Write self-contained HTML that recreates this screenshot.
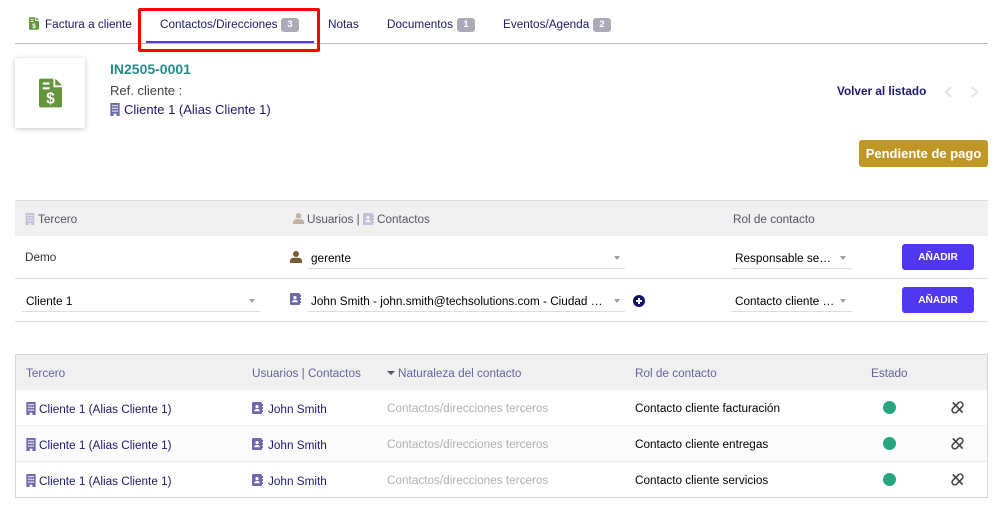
<!DOCTYPE html>
<html><head><meta charset="utf-8"><style>
html,body{margin:0;padding:0;background:#fff;}
body{width:1004px;height:509px;position:relative;overflow:hidden;font-family:"Liberation Sans",sans-serif;font-size:11.75px;color:#000;}
.t{position:absolute;white-space:nowrap;line-height:16px;}
.b{position:absolute;}
.n{color:#1a1a6e;}
.badge{position:absolute;width:18px;height:14px;background:#aaaab8;border-radius:3px;color:#fff;font-size:9.5px;font-weight:bold;line-height:14px;text-align:center;}
.h{color:#555566;}
.h2{color:#6464a0;}
.sel{position:absolute;height:1px;background:#ddd;}
.ar{position:absolute;width:0;height:0;border-left:3.5px solid transparent;border-right:3.5px solid transparent;border-top:4px solid #a0a0a0;}
.btn{position:absolute;left:902px;width:72px;height:26px;background:#4f38f0;border-radius:3px;color:#fff;font-size:10.2px;font-weight:bold;text-align:center;line-height:28px;}
.g{color:#b0b0b0;}
.dot{position:absolute;left:883px;width:13px;height:13px;border-radius:50%;background:#25a580;}
svg{position:absolute;display:block;}
</style></head><body>
<svg width="0" height="0" style="position:absolute"><defs>
<symbol id="bld" viewBox="0 0 10 14"><path d="M0 0H10V14H6.5V11.5H3.5V14H0Z" fill="#6c6aa8"/><g fill="#fff"><rect x="2" y="2" width="1.5" height="1.5"/><rect x="4.3" y="2" width="1.5" height="1.5"/><rect x="6.6" y="2" width="1.5" height="1.5"/><rect x="2" y="5" width="1.5" height="1.5"/><rect x="4.3" y="5" width="1.5" height="1.5"/><rect x="6.6" y="5" width="1.5" height="1.5"/><rect x="2" y="8" width="1.5" height="1.5"/><rect x="4.3" y="8" width="1.5" height="1.5"/><rect x="6.6" y="8" width="1.5" height="1.5"/></g></symbol>
<symbol id="con" viewBox="0 0 11 12"><rect x="0" y="0" width="10" height="12" rx="1.3" fill="#6c6aa8"/><rect x="10" y="2" width="1" height="2" fill="#6c6aa8"/><rect x="10" y="5" width="1" height="2" fill="#6c6aa8"/><rect x="10" y="8" width="1" height="2" fill="#6c6aa8"/><circle cx="5" cy="4.6" r="1.6" fill="#fff"/><path d="M2.2 9.2C2.2 7.6 3.6 7 5 7S7.8 7.6 7.8 9.2Z" fill="#fff"/></symbol>
<symbol id="usr" viewBox="0 0 12 12"><circle cx="6" cy="3" r="3" fill="#7a5c32"/><path d="M0 12V10C0 7.8 2 6.8 3.5 6.8H8.5C10 6.8 12 7.8 12 10V12Z" fill="#7a5c32"/></symbol>
<symbol id="inv" viewBox="0 0 24 30"><path d="M2 0H15V9H24V28A2 2 0 0 1 22 30H2A2 2 0 0 1 0 28V2A2 2 0 0 1 2 0Z" fill="#65953c"/><path d="M17 0L24 7H17Z" fill="#65953c"/><g fill="#fff"><rect x="4" y="4" width="7" height="2.2"/><rect x="4" y="9" width="7" height="2.2"/></g><text x="12" y="26" font-family="Liberation Sans" font-weight="bold" font-size="16" fill="#fff" text-anchor="middle">$</text></symbol>
<symbol id="unl" viewBox="0 0 14 14" fill="none"><path d="M2 1.5L12.5 12.5" stroke="#444" stroke-width="1.7"/><rect x="-7" y="-2.9" width="14" height="5.8" rx="2.9" transform="translate(7 7) rotate(-45)" stroke="#444" stroke-width="1.7"/></symbol>
</defs></svg>

<!-- tabs -->
<svg style="left:29px;top:17px" width="10" height="13"><use href="#inv" width="10" height="13"/></svg>
<div class="t n" style="left:45px;top:17px">Factura a cliente</div>
<div class="t n" style="left:160px;top:17px">Contactos/Direcciones</div>
<div class="badge" style="left:281px;top:18px">3</div>
<div class="t n" style="left:328px;top:17px">Notas</div>
<div class="t n" style="left:387px;top:17px">Documentos</div>
<div class="badge" style="left:457px;top:18px">1</div>
<div class="t n" style="left:503px;top:17px">Eventos/Agenda</div>
<div class="badge" style="left:593px;top:18px">2</div>
<div class="b" style="left:15px;top:43px;width:973px;height:1px;background:#bbb"></div>
<div class="b" style="left:146px;top:41px;width:168px;height:2px;background:#4f38f0"></div>
<div class="b" style="left:138px;top:8px;width:182px;height:44px;box-sizing:border-box;border:3px solid #f00;border-radius:2px"></div>

<!-- header card -->
<div class="b" style="left:15px;top:58px;width:70px;height:70px;background:#fff;box-shadow:0 1px 5px rgba(0,0,0,.22)"></div>
<svg style="left:39px;top:78px" width="23" height="30"><use href="#inv" width="23" height="30"/></svg>
<div class="t" style="left:110px;top:61px;font-size:14px;font-weight:bold;color:#2b8a8a">IN2505-0001</div>
<div class="t" style="left:110px;top:83px;color:#444;font-size:13px">Ref. cliente :</div>
<svg style="left:110px;top:103px" width="10" height="13"><use href="#bld" width="10" height="13"/></svg>
<div class="t n" style="left:124px;top:102px;font-size:13px">Cliente 1 (Alias Cliente 1)</div>

<div class="t" style="left:837px;top:84px;font-size:11.75px;font-weight:bold;color:#1a1a6e">Volver al listado</div>
<svg style="left:944px;top:86px" width="9" height="12" fill="none"><path d="M7 1L2 6L7 11" stroke="#e4e4e4" stroke-width="2"/></svg>
<svg style="left:970px;top:86px" width="9" height="12" fill="none"><path d="M2 1L7 6L2 11" stroke="#e4e4e4" stroke-width="2"/></svg>
<div class="b" style="left:859px;top:140px;width:129px;height:27px;background:#bf9726;border-radius:3px;color:#fff;font-size:13px;font-weight:bold;text-align:center;line-height:27px">Pendiente de pago</div>

<!-- add form -->
<div class="b" style="left:15px;top:200px;width:973px;height:36px;background:#f0f0f0;border-top:1px solid #ddd;box-sizing:border-box"></div>
<svg style="left:25px;top:213px;opacity:.35" width="10" height="12"><use href="#bld" width="10" height="12"/></svg>
<div class="t h" style="left:38px;top:212px">Tercero</div>
<svg style="left:293px;top:213px;opacity:.4" width="11" height="11"><use href="#usr" width="11" height="11"/></svg>
<div class="t h" style="left:307px;top:212px">Usuarios |</div>
<svg style="left:363px;top:213px;opacity:.35" width="11" height="12"><use href="#con" width="11" height="12"/></svg>
<div class="t h" style="left:377px;top:212px">Contactos</div>
<div class="t h" style="left:733px;top:212px">Rol de contacto</div>

<div class="t" style="left:25px;top:250px;color:#333">Demo</div>
<svg style="left:290px;top:251px" width="12" height="12"><use href="#usr" width="12" height="12"/></svg>
<div class="t" style="left:311px;top:251px">gerente</div>
<div class="sel" style="left:307px;top:268px;width:318px"></div>
<div class="ar" style="left:614px;top:256px"></div>
<div class="t" style="left:735px;top:251px">Responsable se…</div>
<div class="sel" style="left:731px;top:268px;width:121px"></div>
<div class="ar" style="left:840px;top:256px"></div>
<div class="btn" style="top:244px">AÑADIR</div>
<div class="b" style="left:15px;top:278px;width:973px;height:1px;background:#ddd"></div>

<div class="t" style="left:26px;top:294px">Cliente 1</div>
<div class="sel" style="left:22px;top:311px;width:238px"></div>
<div class="ar" style="left:249px;top:299px"></div>
<svg style="left:290px;top:293px" width="11" height="12"><use href="#con" width="11" height="12"/></svg>
<div class="t" style="left:311px;top:294px">John Smith - john.smith@techsolutions.com - Ciudad …</div>
<div class="sel" style="left:307px;top:311px;width:318px"></div>
<div class="ar" style="left:614px;top:299px"></div>
<svg style="left:633px;top:295px" width="12" height="12"><circle cx="6" cy="6" r="6" fill="#10106a"/><path d="M6 3V9M3 6H9" stroke="#fff" stroke-width="2"/></svg>
<div class="t" style="left:735px;top:294px">Contacto cliente …</div>
<div class="sel" style="left:731px;top:311px;width:121px"></div>
<div class="ar" style="left:840px;top:299px"></div>
<div class="btn" style="top:287px">AÑADIR</div>
<div class="b" style="left:15px;top:321px;width:973px;height:1px;background:#ddd"></div>

<!-- table -->
<div class="b" style="left:15px;top:354px;width:973px;height:144px;box-sizing:border-box;border:1px solid #d5d5d5"></div>
<div class="b" style="left:16px;top:355px;width:971px;height:35px;background:#f0f0f0"></div>
<div class="b" style="left:16px;top:426px;width:971px;height:36px;background:#fbfbfb"></div>
<div class="b" style="left:16px;top:425px;width:971px;height:1px;background:#eee"></div>
<div class="b" style="left:16px;top:461px;width:971px;height:1px;background:#eee"></div>

<div class="t h2" style="left:26px;top:366px">Tercero</div>
<div class="t h2" style="left:252px;top:366px">Usuarios | Contactos</div>
<div class="ar" style="left:387px;top:371px;border-left-width:4px;border-right-width:4px;border-top-color:#555"></div>
<div class="t h2" style="left:398px;top:366px">Naturaleza del contacto</div>
<div class="t h2" style="left:635px;top:366px">Rol de contacto</div>
<div class="t h2" style="left:871px;top:366px">Estado</div>

<svg style="left:26px;top:402px" width="10" height="13"><use href="#bld" width="10" height="13"/></svg>
<div class="t n" style="left:39px;top:402px">Cliente 1 (Alias Cliente 1)</div>
<svg style="left:252px;top:402px" width="11" height="12"><use href="#con" width="11" height="12"/></svg>
<div class="t n" style="left:268px;top:402px">John Smith</div>
<div class="t g" style="left:387px;top:401px">Contactos/direcciones terceros</div>
<div class="t" style="left:635px;top:401px">Contacto cliente facturación</div>
<div class="dot" style="top:401px"></div>
<svg style="left:951px;top:401px" width="13" height="13"><use href="#unl" width="13" height="13"/></svg>

<svg style="left:26px;top:438px" width="10" height="13"><use href="#bld" width="10" height="13"/></svg>
<div class="t n" style="left:39px;top:438px">Cliente 1 (Alias Cliente 1)</div>
<svg style="left:252px;top:438px" width="11" height="12"><use href="#con" width="11" height="12"/></svg>
<div class="t n" style="left:268px;top:438px">John Smith</div>
<div class="t g" style="left:387px;top:437px">Contactos/direcciones terceros</div>
<div class="t" style="left:635px;top:437px">Contacto cliente entregas</div>
<div class="dot" style="top:437px"></div>
<svg style="left:951px;top:437px" width="13" height="13"><use href="#unl" width="13" height="13"/></svg>

<svg style="left:26px;top:474px" width="10" height="13"><use href="#bld" width="10" height="13"/></svg>
<div class="t n" style="left:39px;top:474px">Cliente 1 (Alias Cliente 1)</div>
<svg style="left:252px;top:474px" width="11" height="12"><use href="#con" width="11" height="12"/></svg>
<div class="t n" style="left:268px;top:474px">John Smith</div>
<div class="t g" style="left:387px;top:473px">Contactos/direcciones terceros</div>
<div class="t" style="left:635px;top:473px">Contacto cliente servicios</div>
<div class="dot" style="top:473px"></div>
<svg style="left:951px;top:473px" width="13" height="13"><use href="#unl" width="13" height="13"/></svg>
</body></html>
